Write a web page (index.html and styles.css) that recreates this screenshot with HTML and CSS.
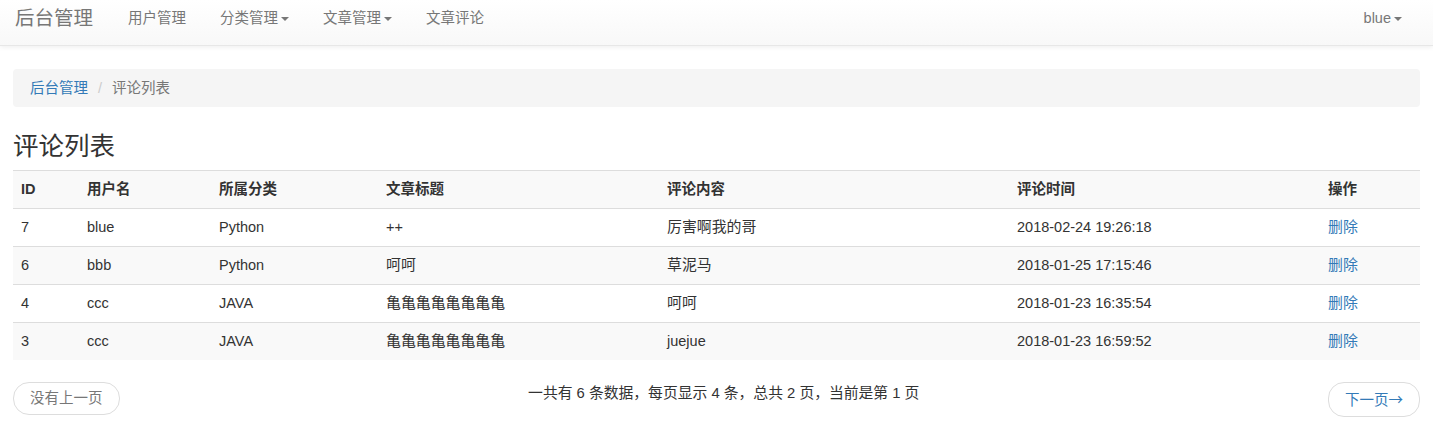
FILE: index.html
```html
<!DOCTYPE html>
<html lang="zh-CN">
<head>
<meta charset="utf-8">
<title>评论列表</title>
<link rel="stylesheet" href="styles.css">
</head>
<body>
<nav class="navbar">
  <div class="nav-left">
    <a class="brand" href="#">后台管理</a>
    <ul class="nav">
      <li><a href="#">用户管理</a></li>
      <li><a href="#">分类管理<span class="caret"></span></a></li>
      <li><a href="#">文章管理<span class="caret"></span></a></li>
      <li><a href="#">文章评论</a></li>
    </ul>
  </div>
  <ul class="nav nav-right">
    <li><a href="#">blue<span class="caret"></span></a></li>
  </ul>
</nav>
<div class="container">
  <ol class="breadcrumb">
    <li><a href="#">后台管理</a></li>
    <li class="sep">/</li>
    <li class="active">评论列表</li>
  </ol>
  <h3 class="title">评论列表</h3>
  <table class="table">
    <colgroup>
      <col class="c-id"><col class="c-user"><col class="c-cat"><col class="c-title"><col class="c-content"><col class="c-time"><col class="c-op">
    </colgroup>
    <tbody>
      <tr class="head"><th>ID</th><th>用户名</th><th>所属分类</th><th>文章标题</th><th>评论内容</th><th>评论时间</th><th>操作</th></tr>
      <tr><td>7</td><td>blue</td><td>Python</td><td>++</td><td class="cjk">厉害啊我的哥</td><td>2018-02-24 19:26:18</td><td><a class="cjk" href="#">删除</a></td></tr>
      <tr><td>6</td><td>bbb</td><td>Python</td><td class="cjk">呵呵</td><td class="cjk">草泥马</td><td>2018-01-25 17:15:46</td><td><a class="cjk" href="#">删除</a></td></tr>
      <tr><td>4</td><td>ccc</td><td>JAVA</td><td class="cjk">亀亀亀亀亀亀亀亀</td><td class="cjk">呵呵</td><td>2018-01-23 16:35:54</td><td><a class="cjk" href="#">删除</a></td></tr>
      <tr><td>3</td><td>ccc</td><td>JAVA</td><td class="cjk">亀亀亀亀亀亀亀亀</td><td>juejue</td><td>2018-01-23 16:59:52</td><td><a class="cjk" href="#">删除</a></td></tr>
    </tbody>
  </table>
  <div class="pager">
    <span class="pager-btn disabled">没有上一页</span>
    <span class="pager-info">一共有 6 条数据，每页显示 4 条，总共 2 页，当前是第 1 页</span>
    <a class="pager-btn" href="#">下一页<span class="arrow">→</span></a>
  </div>
</div>
</body>
</html>
```
FILE: styles.css
```css
* { box-sizing: border-box; }
body {
  margin: 0;
  font-family: "Liberation Sans", "Noto Sans CJK SC", sans-serif;
  font-size: 14.5px;
  line-height: 21px;
  color: #333;
  background: #fff;
}
a { color: #337ab7; text-decoration: none; }
ul, ol { list-style: none; margin: 0; padding: 0; }

.navbar {
  display: flex;
  justify-content: space-between;
  align-items: flex-start;
  height: 46px;
  background: linear-gradient(to bottom, #fff 0, #f8f8f8 100%);
  border-bottom: 1px solid #e7e7e7;
  box-shadow: 0 1px 5px rgba(0,0,0,.075);
}
.nav-left { display: flex; align-items: flex-start; }
.brand {
  display: block;
  padding: 8px 18px 0 15px;
  font-size: 19.5px;
  line-height: 21px;
  color: #777;
}
.nav { display: flex; }
.nav a {
  display: block;
  padding: 8px 17px 0;
  color: #777;
  line-height: 21px;
}
.nav-right { padding-right: 14px; }
.caret {
  display: inline-block;
  width: 0;
  height: 0;
  margin-left: 3px;
  vertical-align: middle;
  border-top: 4px solid #777;
  border-left: 4px solid transparent;
  border-right: 4px solid transparent;
}

.container {
  padding: 0 13px;
  margin-top: 23px;
}
.breadcrumb {
  display: flex;
  margin: 0 0 25px;
  padding: 8.5px 17px;
  background: #f5f5f5;
  border-radius: 4px;
}
.breadcrumb .sep { color: #ccc; padding: 0 10px; }
.breadcrumb .active { color: #777; }

.title {
  margin: 0 0 10px;
  font-size: 25.5px;
  line-height: 28px;
  font-weight: normal;
  color: #333;
}

.table {
  width: 100%;
  border-collapse: collapse;
  table-layout: fixed;
  margin-bottom: 22px;
}
.c-id { width: 66px; }
.c-user { width: 132px; }
.c-cat { width: 167px; }
.c-title { width: 281px; }
.c-content { width: 350px; }
.c-time { width: 311px; }
.c-op { width: 100px; }
.table th, .table td {
  padding: 8px;
  line-height: 21px;
  text-align: left;
  border-top: 1px solid #ddd;
  white-space: nowrap;
}
.table th { font-weight: bold; }
.table .cjk { font-size: 14.9px; }
.table tr:nth-child(odd) { background: #f9f9f9; }

.pager {
  display: flex;
  justify-content: space-between;
  align-items: flex-start;
}
.pager-btn {
  display: inline-block;
  padding: 5px 16px;
  line-height: 21px;
  border: 1px solid #ddd;
  border-radius: 16px;
  background: #fff;
}
.pager-btn.disabled { color: #777; }
.arrow { font-family: "Noto Sans CJK SC", sans-serif; }
.pager-info { line-height: 21px; margin-top: 1px; font-size: 14.8px; }
```
